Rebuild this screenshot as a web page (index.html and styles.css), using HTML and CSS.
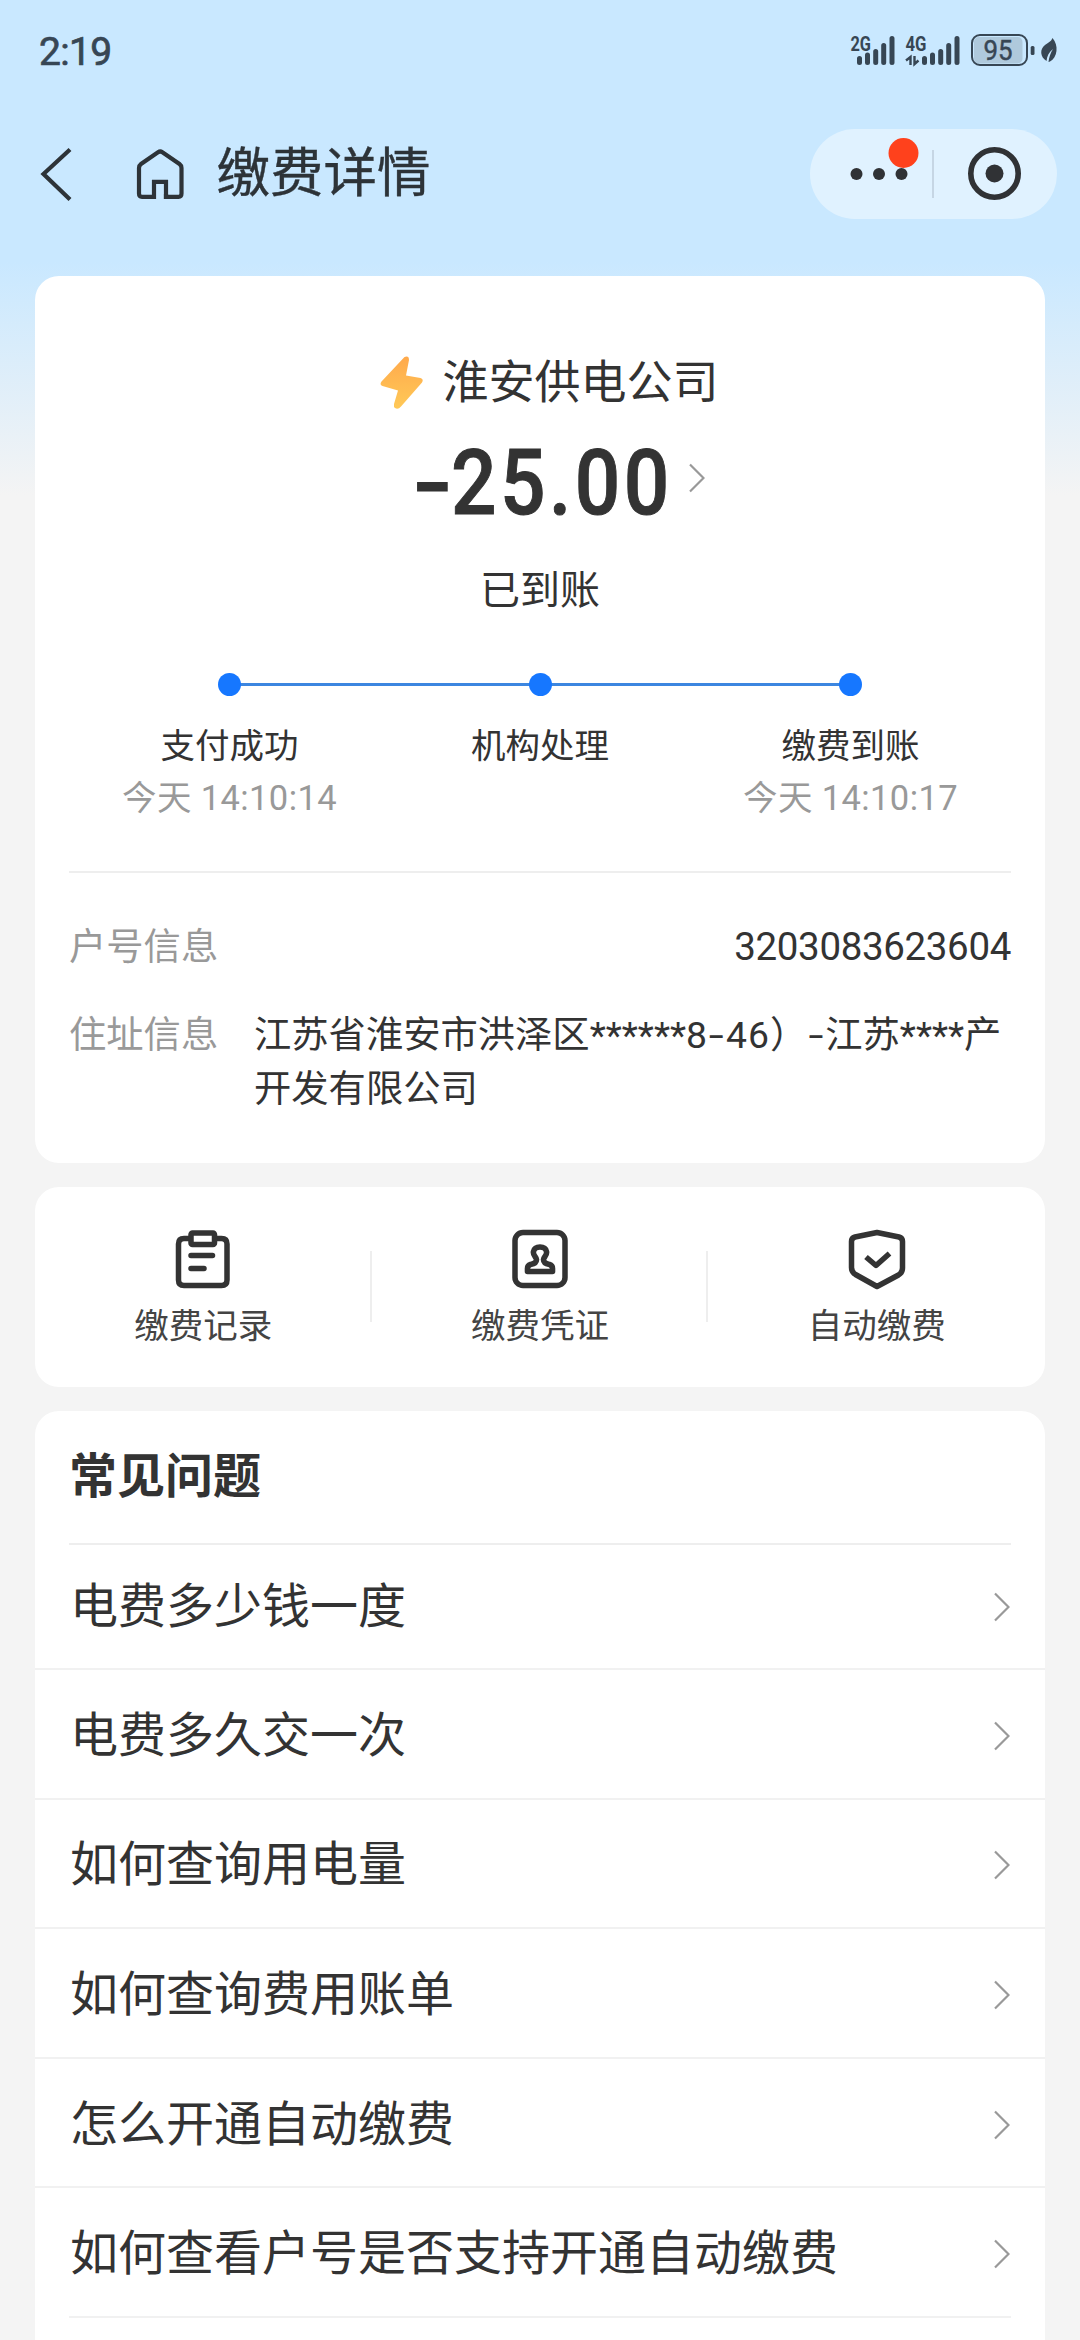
FILE: index.html
```html
<!DOCTYPE html>
<html lang="zh-CN">
<head>
<meta charset="utf-8">
<title>缴费详情</title>
<link rel="stylesheet" href="styles.css">
</head>
<body>
<div class="page">
  <header class="status">
    <span class="clock">2:19</span>
    <svg class="status-icons" width="212" height="40" viewBox="848 31 212 40">
      <g fill="#374654">
        <text class="net" x="850.5" y="51" textLength="20.5" lengthAdjust="spacingAndGlyphs">2G</text>
        <text class="net" x="905.5" y="51" textLength="21" lengthAdjust="spacingAndGlyphs">4G</text>
      </g>
      <g stroke="#374654" stroke-width="5" stroke-linecap="round">
        <path d="M859.5 58.5V62.500M867.500 55V62.500M875.700 51.500V62.500M883.700 45.500V62.500M892 38.500V62.500"/>
        <path d="M924.500 58.500V62.500M932.500 55V62.500M940.700 51.500V62.500M948.700 45.500V62.500M957 38.500V62.500"/>
      </g>
      <path d="M906 60.500L910.500 57V65M914.500 56V64L918.500 60.500" fill="none" stroke="#374654" stroke-width="2.400"/>
      <rect x="974" y="37" width="48.500" height="26.500" rx="5" fill="#afc9dc"/>
      <rect x="972" y="35" width="55" height="30" rx="8" fill="none" stroke="#374654" stroke-width="2"/>
      <rect x="1030.700" y="46" width="3.800" height="9" rx="1.500" fill="#374654"/>
      <text class="battery" x="983.500" y="60" textLength="29" lengthAdjust="spacingAndGlyphs">95</text>
      <path d="M1052.500 38C1059 45 1057.500 58 1050 61.500L1048.500 62C1049 57 1050.500 53 1053 49C1049 52 1047 56 1046.500 61C1040 57 1039.500 49 1045 45C1048 42.500 1051 42 1052.500 38Z" fill="#374654"/>
    </svg>
  </header>

  <nav class="nav">
    <svg class="back" width="34" height="56" viewBox="40 146 34 56"><path d="M70 149.500L43.500 174L70 199.500" fill="none" stroke="#2d3338" stroke-width="4.200"/></svg>
    <svg class="home" width="50" height="54" viewBox="134.500 147 50 54"><path d="M153.500 196.800H141.500Q138.500 196.800 138.500 193.500V168Q138.500 165.500 140.500 164L157.500 152.200Q159.700 150.800 161.900 152.200L179 164Q181 165.500 181 168V193.500Q181 196.800 178 196.800H165.500V181.800H153.500V199" fill="none" stroke="#2d3338" stroke-width="4.200"/><path d="M165.500 194V199" stroke="#2d3338" stroke-width="4.200"/></svg>
    <h1 class="title">缴费详情</h1>
    <div class="capsule">
      <svg width="247" height="90" viewBox="809.500 129 247 90">
        <g fill="#303235"><circle cx="856" cy="174" r="6"/><circle cx="878.500" cy="174" r="6"/><circle cx="901" cy="174" r="6"/><circle cx="994" cy="173.500" r="9"/></g>
        <circle cx="903" cy="153" r="15" fill="#ff411c"/>
        <path d="M932.500 150V198" stroke="#b4c3d2" stroke-width="1.200"/>
        <circle cx="994" cy="173.500" r="23.700" fill="none" stroke="#303235" stroke-width="5.600"/>
      </svg>
    </div>
  </nav>

  <main class="content">
    <section class="card summary">
      <div class="company">
        <svg width="45" height="56" viewBox="379 356 45 56"><defs><linearGradient id="bolt" x1="0" y1="0" x2="0" y2="1"><stop offset="0" stop-color="#ffa94c"/><stop offset="1" stop-color="#ffc957"/></linearGradient></defs><path d="M404.500 358Q409 356.200 409 361L406 376.500L420.500 379Q424 380 422 383.500L401 407.500Q398 411 395 409Q393.500 408 394 405L398 391.500L382.500 387Q379.200 385.500 381.500 382.500Z" fill="url(#bolt)"/></svg>
        <span>淮安供电公司</span>
      </div>
      <div class="amount-row">
        <span class="amount"><span class="minus">-</span><span class="digits">25.00</span></span>
        <svg class="chev" width="16" height="30" viewBox="0 0 16 30"><path d="M1 1.500L14.500 15L1 28.500"/></svg>
      </div>
      <div class="state">已到账</div>
      <div class="steps">
        <div class="step"><i class="dot"></i><b>支付成功</b><small>今天 14:10:14</small></div>
        <div class="step"><i class="dot"></i><b>机构处理</b></div>
        <div class="step"><i class="dot"></i><b>缴费到账</b><small>今天 14:10:17</small></div>
      </div>
      <dl class="info">
        <div class="info-row"><dt>户号信息</dt><dd class="number">3203083623604</dd></div>
        <div class="info-row"><dt>住址信息</dt><dd class="address">江苏省淮安市洪泽区******<span class="num">8<span class="dash">-</span>46</span>）<span class="dash">-</span>江苏****产<br>开发有限公司</dd></div>
      </dl>
    </section>

    <section class="card actions">
      <div class="action">
        <svg width="60" height="62" viewBox="0 0 60 62"><g fill="none" stroke="#333" stroke-width="5.500" stroke-linejoin="round" stroke-linecap="round"><path d="M17 9.500H11Q5.500 9.500 5.500 15V51Q5.500 56.500 11 56.500H48.500Q54 56.500 54 51V15Q54 9.500 48.500 9.500H42"/><rect x="18" y="4" width="23.500" height="11.500" rx="1.500"/><path d="M18 26.500H39.500M18 39.500H31"/></g></svg>
        <span>缴费记录</span>
      </div>
      <div class="action">
        <svg width="60" height="62" viewBox="0 0 60 62"><g fill="none" stroke="#333" stroke-width="5.500" stroke-linejoin="round"><rect x="5" y="3.500" width="50" height="53" rx="8"/><path d="M17.500 42.500V39.500Q17.500 36.500 20.500 35.500Q26.500 34.500 26.500 30.500Q26.500 29.500 25 27.500Q23 25 23.500 22.500Q24.500 18 30 18Q35.500 18 36.500 22.500Q37 25 35 27.500Q33.500 29.500 33.500 30.500Q33.500 34.500 39.500 35.500Q42.500 36.500 42.500 39.500V42.500Z" stroke-width="5.600"/></g></svg>
        <span>缴费凭证</span>
      </div>
      <div class="action">
        <svg width="60" height="62" viewBox="0 0 60 62"><g fill="none" stroke="#333" stroke-width="5.500" stroke-linejoin="round"><path d="M30 3.500L52 8Q55.500 9 55.500 12.500V39Q55.500 43.500 51.500 46L30 57.500L8.500 45.500Q4.500 43 4.500 38.500V12.500Q4.500 9 8 8Z"/><path d="M19 28L29 36.500L42.500 24.500"/></g></svg>
        <span>自动缴费</span>
      </div>
    </section>

    <section class="card faq">
      <h2>常见问题</h2>
      <ul>
        <li><span>电费多少钱一度</span><svg class="chev" width="16" height="30" viewBox="0 0 16 30"><path d="M1 1.500L14.500 15L1 28.500"/></svg></li>
        <li><span>电费多久交一次</span><svg class="chev" width="16" height="30" viewBox="0 0 16 30"><path d="M1 1.500L14.500 15L1 28.500"/></svg></li>
        <li><span>如何查询用电量</span><svg class="chev" width="16" height="30" viewBox="0 0 16 30"><path d="M1 1.500L14.500 15L1 28.500"/></svg></li>
        <li><span>如何查询费用账单</span><svg class="chev" width="16" height="30" viewBox="0 0 16 30"><path d="M1 1.500L14.500 15L1 28.500"/></svg></li>
        <li><span>怎么开通自动缴费</span><svg class="chev" width="16" height="30" viewBox="0 0 16 30"><path d="M1 1.500L14.500 15L1 28.500"/></svg></li>
        <li><span>如何查看户号是否支持开通自动缴费</span><svg class="chev" width="16" height="30" viewBox="0 0 16 30"><path d="M1 1.500L14.500 15L1 28.500"/></svg></li>
      </ul>
    </section>
  </main>
</div>
</body>
</html>
```

FILE: styles.css
```css
* { box-sizing: border-box; margin: 0; padding: 0; }
body {
  font-family: Roboto, "Noto Sans CJK SC", sans-serif;
  color: #333;
  background: #f4f4f4;
}
svg { display: block; flex: none; }
.page {
  width: 1080px;
  height: 2340px;
  overflow: hidden;
  background: linear-gradient(#c9e8ff 0, #c9e8ff 262px, #f4f4f4 495px);
}

.status {
  height: 102px;
  padding: 0 20px 0 39px;
  display: flex;
  justify-content: space-between;
  align-items: center;
}
.clock { padding-top: 2px; font-size: 39px; font-weight: 400; color: #374654; line-height: 40px; letter-spacing: -0.7px; -webkit-text-stroke: 0.7px #374654; }
.net { font: bold 20px Roboto, sans-serif; }
.battery { font: 400 28px Roboto, sans-serif; fill: #374654; stroke: #374654; stroke-width: 0.5px; }

.nav {
  height: 144px;
  padding: 0 23.5px 0 40px;
  display: flex;
  align-items: center;
}
.home { margin-left: 60.5px; }
.title { margin-left: 32px; font-size: 53.5px; line-height: 60px; font-weight: 400; color: #2d3338; -webkit-text-stroke: 0.4px #2d3338; }
.capsule { margin-left: auto; border-radius: 45px; background: #e0f2ff; }

.content { padding: 30px 35px 0; display: flex; flex-direction: column; gap: 24px; }
.card { background: #fff; border-radius: 24px; }

.summary { height: 887px; padding: 75px 34px 0; }
.company { display: flex; justify-content: center; align-items: center; gap: 19px; height: 64px; padding-left: 17px; font-size: 46px; line-height: 60px; }
.company span { margin-top: -2px; }
.amount-row { display: flex; justify-content: center; align-items: center; gap: 20px; height: 100px; margin-top: 18px; padding-left: 39px; }
.amount { display: flex; font-size: 91px; font-weight: 500; line-height: 100px; -webkit-text-stroke: 1px #333; }
.amount .minus { width: 37px; text-align: center; transform: scaleX(1.25); }
.amount .digits { width: 218px; letter-spacing: 4px; transform: scaleX(0.88); transform-origin: 0 50%; }
.amount-row .chev { margin-bottom: 10px; }
.chev path { fill: none; stroke: #999; stroke-width: 2.200; }
.state { margin-top: 28px; text-align: center; font-size: 40px; line-height: 60px; }

.steps { display: grid; grid-template-columns: repeat(3, 310.500px); justify-content: center; margin-top: 52px; height: 198px; }
.step { display: grid; grid-template-rows: 23px 76px 52px; justify-items: center; align-items: end; height: 150px; position: relative; }
.step + .step::before { content: ""; position: absolute; left: -155px; top: 10px; width: 310px; height: 3px; background: #3c86e0; }
.dot { width: 23px; height: 23px; border-radius: 50%; background: #1677ff; position: relative; z-index: 1; }
.step b { font-size: 34.500px; line-height: 52px; font-weight: 400; }
.step small { font-size: 34.500px; line-height: 52px; color: #999; white-space: nowrap; letter-spacing: 0.4px; }

.info { border-top: 2px solid #eee; padding-top: 47px; }
.info-row { display: flex; justify-content: space-between; font-size: 37.300px; line-height: 54px; margin-bottom: 34px; }
.info dt { color: #999; }
.number { font-size: 38.500px; letter-spacing: -0.35px; }
.address { width: 757px; white-space: nowrap; }
.address .num { letter-spacing: 1px; }
.dash { display: inline-block; width: 18px; text-align: center; transform: scaleX(1.45); }

.actions { height: 200px; display: grid; grid-template-columns: repeat(3, 1fr); align-items: center; }
.action { display: flex; flex-direction: column; align-items: center; font-size: 34.500px; line-height: 52px; color: #444; gap: 8px; padding-top: 10px; position: relative; }
.action svg { margin: -3px 0 1px; }
.action + .action::before { content: ""; position: absolute; left: -2px; top: 29px; width: 2px; height: 71px; background: #eee; }

.faq { height: 960px; }
.faq h2 { margin: 0 34px; height: 134px; padding-top: 36px; font-size: 48px; line-height: 60px; font-weight: 700; border-bottom: 2px solid #eee; }
.faq ul { list-style: none; }
.faq li { height: 129.600px; padding: 4px 35px 0; display: flex; align-items: center; justify-content: space-between; border-bottom: 2px solid #f1f1f1; font-size: 48px; line-height: 64px; }
.faq li:first-child { height: 125px; padding-top: 0; }
.faq li:last-child { margin: 0 34px; padding: 4px 1px 0; }
```
